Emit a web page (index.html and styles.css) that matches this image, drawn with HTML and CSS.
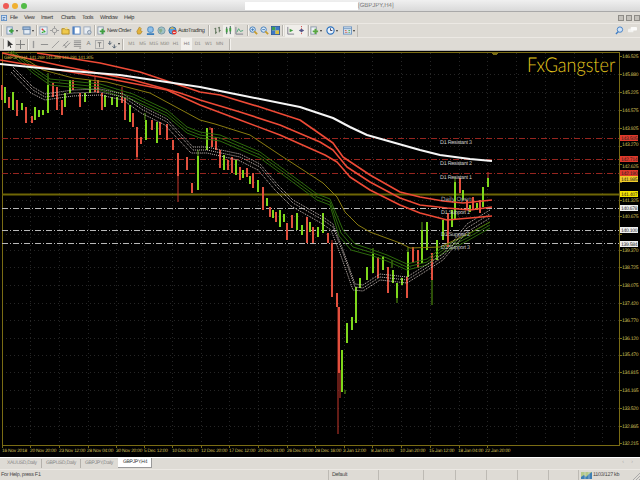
FILE: index.html
```html
<!DOCTYPE html>
<html lang="en">
<head>
<meta charset="utf-8">
<title>GBPJPY,H4</title>
<link rel="stylesheet" href="styles.css">
</head>
<body>
<div class="app">
  <header class="titlebar">
    <span class="light red"></span><span class="light amber"></span><span class="light green"></span>
    <span class="search-field"></span>
    <span class="title">[GBPJPY,H4]</span>
  </header>
  <nav class="menubar">
    <svg class="app-icon" viewBox="0 0 7 7"><rect x=".5" y=".5" width="6" height="6" fill="#cfe0f4" stroke="#5d8cc4"/><path d="M2 3h3M2 5h2" stroke="#3d6ca4"/></svg>
    <span class="menu m-file">File</span><span class="menu m-view">View</span><span class="menu m-insert">Insert</span><span class="menu m-charts">Charts</span><span class="menu m-tools">Tools</span><span class="menu m-window">Window</span><span class="menu">Help</span>
    <span class="winbtns"><i></i><i></i><i></i></span>
  </nav>
  <div class="toolbar">
    <span class="sep s-first"></span>
    <span class="btn wide w16"><svg viewBox="0 0 10 10"><rect x="1" y="1" width="6" height="8" fill="#dfe9f5" stroke="#7a94b4"/><path d="M6 3v5M3.500 5.500h5" stroke="#3fa03f" stroke-width="2"/></svg><b class="caret"></b></span>
    <span class="btn wide"><svg viewBox="0 0 10 10"><rect x="1" y="1" width="8" height="3" fill="#9db9da" stroke="#5d80a8"/><rect x="2" y="4" width="7" height="5" fill="#e6edf5" stroke="#6d8cb0"/></svg><b class="caret"></b></span>
    <span class="sep s-a"></span>
    <span class="btn"><svg viewBox="0 0 10 10"><rect x="1" y="1" width="8" height="8" fill="#edf1f6" stroke="#8da3bd"/><path d="M3 3l2 2" stroke="#d33" stroke-width="1.500"/><path d="M5 5l2 2M3 7h2" stroke="#3a3" stroke-width="1.500"/></svg></span>
    <span class="btn"><svg viewBox="0 0 10 10"><circle cx="5" cy="5" r="2.500" fill="none" stroke="#999"/><path d="M5 0v3M5 7v3M0 5h3M7 5h3" stroke="#999"/></svg></span>
    <span class="btn"><svg viewBox="0 0 10 10"><path d="M1 3h3l1 1h4v5H1z" fill="#efc94c" stroke="#b08a20"/><circle cx="6" cy="2.500" r="1.500" fill="#f3dc8c"/></svg></span>
    <span class="btn"><svg viewBox="0 0 10 10"><rect x="1" y="1" width="8" height="8" fill="#fff" stroke="#4d7fc0"/><rect x="1" y="1" width="2" height="8" fill="#4d7fc0"/></svg></span>
    <span class="btn"><svg viewBox="0 0 10 10"><rect x="1" y="1" width="7" height="8" fill="#e8edf3" stroke="#9aa9bb"/><circle cx="7" cy="7" r="2" fill="#cfd9e6" stroke="#7e8ea3"/></svg></span>
    <span class="sep s-b"></span>
    <span class="btn textbtn"><svg viewBox="0 0 10 10"><rect x="1" y="1" width="6" height="8" fill="#eef2f6" stroke="#8a98a8"/><path d="M6 3v6M3 6h6" stroke="#3fa03f" stroke-width="2"/></svg><span class="label l-order">New Order</span></span>
    <span class="btn"><svg viewBox="0 0 10 10"><path d="M2 6l3-5 2 2-1 2 2 1-2 3H3z" fill="#e2b23c" stroke="#9c7418" stroke-width=".6"/></svg></span>
    <span class="btn"><svg viewBox="0 0 10 10"><rect x="2" y="1" width="6" height="6" rx="2" fill="#8fc0e8" stroke="#3d7fbc"/><path d="M1 9h8" stroke="#3d7fbc" stroke-width="2"/></svg></span>
    <span class="btn"><svg viewBox="0 0 10 10"><circle cx="5" cy="5" r="4" fill="#9fc3c6" stroke="#7896a6"/><path d="M2 4l3-1 1 2-2 3" fill="#88ab88"/></svg></span>
    <span class="btn textbtn auto"><svg viewBox="0 0 10 10"><circle cx="5" cy="5" r="4" fill="#58a0dc" stroke="#2a6ca8"/><path d="M1.500 3l3-2 3 2z" fill="#e8b43c"/><rect x="4.500" y="4.500" width="5" height="5" rx="2.500" fill="#e02c24"/><rect x="5.500" y="6.500" width="3" height="1" fill="#fff"/></svg><span class="label l-auto">AutoTrading</span></span>
    <span class="sep s-c"></span>
    <span class="btn"><svg viewBox="0 0 10 10"><path d="M3 2v7M1.500 3H3M3 7h1.500M7 1v6M5.500 2H7M7 5h1.500" stroke="#556b50"/></svg></span>
    <span class="btn active"><svg viewBox="0 0 10 10"><path d="M3 1v8M7 0v9" stroke="#355"/><rect x="2" y="3" width="2" height="4" fill="#3f9f3f"/><rect x="6" y="2" width="2" height="4" fill="#3f9f3f"/></svg></span>
    <span class="btn"><svg viewBox="0 0 10 10"><path d="M1 1v8h8" fill="none" stroke="#778"/><path d="M2 7l2-4 2 3 3-1" fill="none" stroke="#3f9f6f"/></svg></span>
    <span class="sep s-d"></span>
    <span class="btn"><svg viewBox="0 0 10 10"><circle cx="4" cy="4" r="3" fill="#d8e8f6" stroke="#3d78b8"/><path d="M6 6l3 3" stroke="#c89c2c" stroke-width="2"/><path d="M2.500 4h3M4 2.500v3" stroke="#3d78b8"/></svg></span>
    <span class="btn"><svg viewBox="0 0 10 10"><circle cx="4" cy="4" r="3" fill="#d8e8f6" stroke="#3d78b8"/><path d="M6 6l3 3" stroke="#c89c2c" stroke-width="2"/><path d="M2.500 4h3" stroke="#3d78b8"/></svg></span>
    <span class="btn"><svg viewBox="0 0 10 10"><rect x="1" y="1" width="4" height="4" fill="#3f9f4f"/><rect x="5" y="1" width="4" height="4" fill="#3d78c8"/><rect x="1" y="5" width="4" height="4" fill="#3d78c8"/><rect x="5" y="5" width="4" height="4" fill="#d8c040"/><rect x=".5" y=".5" width="9" height="9" fill="none" stroke="#2d5d9c"/></svg></span>
    <span class="sep s-e"></span>
    <span class="btn active"><svg viewBox="0 0 10 10"><path d="M2 1v8h7" fill="none" stroke="#778"/><path d="M4 3l4 2-4 2z" fill="#3f9f3f"/></svg></span>
    <span class="btn active"><svg viewBox="0 0 10 10"><path d="M5 0v10" stroke="#c33" stroke-dasharray="1 1"/><path d="M2 5l3-2v4zM8 5L5 3v4z" fill="#558"/></svg></span>
    <span class="sep s-f"></span>
    <span class="btn wide w16"><svg viewBox="0 0 10 10"><rect x="1" y="1" width="6" height="8" fill="#eef2f6" stroke="#8a98a8"/><path d="M6 3v6M3 6h6" stroke="#58a83f" stroke-width="2"/></svg><b class="caret"></b></span>
    <span class="btn wide w17"><svg viewBox="0 0 10 10"><circle cx="5" cy="5" r="4" fill="#eaf2fa" stroke="#2f74c0" stroke-width="1.300"/><path d="M5 2.500V5h2" fill="none" stroke="#335"/></svg><b class="caret"></b></span>
    <span class="btn wide"><svg viewBox="0 0 10 10"><rect x=".5" y="1" width="9" height="8" fill="#dce8f4" stroke="#6d94c0"/><path d="M1 3h8" stroke="#6d94c0"/><path d="M2 5h2M2 7h3" stroke="#c65"/><path d="M6 5h2M6 7h2" stroke="#5a5"/></svg><b class="caret"></b></span>
    <span class="toolbar-end"></span>
    <span class="tools-right">
      <svg viewBox="0 0 10 10"><circle cx="5.500" cy="4" r="3" fill="#cfe2f6" stroke="#3d7cc4"/><path d="M3.500 6.500L1 9" stroke="#3d7cc4" stroke-width="1.500"/></svg>
      <svg viewBox="0 0 10 10"><rect x="0" y="3" width="6" height="4" rx="1" fill="#f2f2f0"/><rect x="3" y="1" width="7" height="4" rx="1" fill="#fbfbfa"/></svg>
    </span>
  </div>
  <div class="toolbar second">
    <span class="grip"></span>
    <span class="btn active"><svg viewBox="0 0 10 10"><path d="M3 0v8l2-2 1 3 1-.5L6 5.500h3z" fill="#333"/></svg></span>
    <span class="btn"><svg viewBox="0 0 10 10"><path d="M5 0v10M0 5h10" stroke="#777"/></svg></span>
    <span class="sep s-g"></span>
    <span class="btn"><svg viewBox="0 0 10 10"><path d="M5 1v8" stroke="#999" stroke-width="1.500"/></svg></span>
    <span class="btn"><svg viewBox="0 0 10 10"><path d="M1 5h8" stroke="#888"/></svg></span>
    <span class="btn"><svg viewBox="0 0 10 10"><path d="M1 9l8-8" stroke="#999"/></svg></span>
    <span class="btn"><svg viewBox="0 0 10 10"><path d="M1 7l6-6M3 9l6-6M2 5l3 3" stroke="#888"/></svg></span>
    <span class="btn"><svg viewBox="0 0 10 10"><path d="M1 1h8M1 3h8M1 5h8M1 7h8M7 9h2" stroke="#888"/></svg></span>
    <span class="btn glyph">A</span>
    <span class="btn"><svg viewBox="0 0 10 10"><rect x=".5" y=".5" width="9" height="9" fill="none" stroke="#aaa"/><path d="M3 3h4M5 3v5" stroke="#777"/></svg></span>
    <span class="btn wide w-arrows"><svg viewBox="0 0 10 10"><path d="M2 1v4M0 3l2 2 2-2M7 5v4M5 7l2 2 2-2" fill="none" stroke="#456"/></svg><b class="caret"></b></span>
    <span class="sep s-h"></span>
    <span class="tf">M1</span><span class="tf">M5</span><span class="tf">M15</span><span class="tf">M30</span><span class="tf">H1</span><span class="tf on">H4</span><span class="tf">D1</span><span class="tf">W1</span><span class="tf">MN</span>
    <span class="sep"></span>
  </div>
  <main class="chart-wrap">
    <svg class="chart" viewBox="0 0 640 406">
      <g transform="translate(0 -51)">
        <rect x="0" y="51" width="640" height="406" fill="#000"/>
        <path class="grid" d="M30 53V445M59 53V445M88 53V445M116 53V445M144 53V445M172 53V445M201 53V445M229 53V445M258 53V445M287 53V445M315 53V445M344 53V445M372 53V445M401 53V445M430 53V445M459 53V445M487 53V445M516 53V445M545 53V445M574 53V445M602 53V445M2 74H619M2 92H619M2 110H619M2 128H619M2 146H619M2 164H619M2 182H619M2 200H619M2 216H619M2 234H619M2 250H619M2 267H619M2 285H619M2 303H619M2 320H619M2 338H619M2 355H619M2 372H619M2 390H619M2 408H619M2 426H619"/>
        <path class="frame" d="M2 52.500H619.500V445.500H2V52.500"/>
        <path class="frame" d="M492 53h6l-3 2z"/>
        <path class="frame ticks" d="M2 445v3M30 445v3M59 445v3M88 445v3M116 445v3M144 445v3M172 445v3M201 445v3M229 445v3M258 445v3M287 445v3M315 445v3M344 445v3M372 445v3M401 445v3M430 445v3M459 445v3M487 445v3M619 56h3M619 74h3M619 92h3M619 110h3M619 128h3M619 146h3M619 164h3M619 182h3M619 200h3M619 216h3M619 234h3M619 250h3M619 267h3M619 285h3M619 303h3M619 320h3M619 338h3M619 355h3M619 372h3M619 390h3M619 408h3M619 426h3M619 443h3"/>

        <path class="level-red" d="M2 138.500H619M2 159.500H619M2 173.500H619"/>
        <path class="level-open" d="M2 194.500H619"/>
        <path class="level-white" d="M2 208.500H619M2 230.500H619M2 243.500H619"/>

        <path class="wick-red" d="M178 153V202M338 307V434M122 87V100M210 127V130M95 77V90M432 253V280M448 213V247M488 172V178M332 240V250M137 157V160M340 370V398"/>
        <path class="wick-green" d="M48 73V85M432 263V305M422 222V230M373 248V254M392 260V268M397 298V303M145 113V120M198 150V156M455 177V182M345 390V394M408 247V252"/>

        <path class="body-red" d="M2 85V100M9 97V108M17 100V116M26 107V123M32 116V123M53 83V97M57 87V110M62 100V115M73 80V90M80 93V107M95 82V92M98 80V93M102 93V110M122 97V103M125 97V120M133 113V127M137 127V157M141 137V144M152 120V130M160 122V135M167 124V140M173 140V150M178 153V176M187 157V170M192 183V193M212 128V147M216 137V150M220 150V168M228 160V170M232 157V173M240 167V180M247 168V177M253 173V188M263 187V210M270 207V217M276 212V222M287 223V240M292 215V228M307 217V243M313 227V243M328 233V243M332 243V297M337 293V307M339 307V373M388 267V293M378 257V278M407 277V298M413 247V263M418 250V268M432 253V280M448 213V247M460 178V193M467 200V210M473 197V210M480 200V213"/>
        <path class="body-green" d="M5 87V103M13 92V110M22 103V110M35 107V120M39 110V117M43 110V115M48 85V113M65 93V107M70 80V93M85 93V102M90 80V93M105 95V107M112 97V105M117 97V107M130 105V122M146 120V140M157 122V143M198 156V190M207 128V150M224 155V170M236 160V175M243 170V178M250 176V184M258 180V192M267 198V206M273 210V218M280 210V227M284 214V222M297 213V230M302 225V235M310 222V232M318 227V237M323 213V233M342 350V392M347 323V343M352 317V330M356 287V323M360 278V288M367 267V280M373 254V273M383 256V270M393 270V283M397 283V298M402 278V285M408 252V277M422 230V263M427 222V250M437 240V260M443 220V240M452 210V227M455 182V220M463 190V200M470 205V212M477 203V210M483 187V207M488 178V187"/>

        <path class="ma-olive" d="M8 52L30 62 43 70 73 78 107 82 150 93 187 113 200 120 215 124 250 135 280 155 323 183 337 197 345 212 358 225 370 232 400 243 410 248 440 247 470 233 490 222"/>
        <g class="ma-green">
          <path d="M13 51L33 67 50 79 100 84 133 94 167 110 187 127 200 132 220 135 260 152 290 174 317 194 330 199 343 230 355 244 373 250 387 255 407 264 427 259 443 247 467 235 490 222"/>
          <path d="M11 51L33 70 50 82 100 87 133 97 167 113 187 130 200 135 220 138 260 155 290 177 317 197 330 202 341 233 353 247 373 253 387 258 407 267 427 262 443 250 467 238 490 225"/>
          <path d="M9 52L33 73 50 85 100 90 133 100 167 116 187 133 200 138 220 141 260 158 290 180 317 200 330 205 339 236 351 250 373 256 387 261 407 270 427 265 443 253 467 241 490 228"/>
        </g>
        <g class="ma-dots">
          <path d="M13 67L33 87 45 94 73 90 100 89 123 94 143 107 167 119 193 147 207 147 240 154 260 164 277 184 293 200 323 217 333 224 343 250 355 284 363 285 380 274 407 277 423 267 443 254 467 224 490 210"/>
          <path d="M13 70L33 90 45 97 73 93 100 92 123 97 143 110 167 122 193 150 207 150 240 157 260 167 277 187 293 203 323 220 333 227 343 253 355 287 363 288 380 277 407 280 423 270 443 257 467 228 490 214"/>
          <path d="M11 72L31 93 45 100 73 96 100 95 123 100 141 113 165 125 191 153 207 153 238 160 258 170 275 190 291 206 321 223 331 230 341 256 353 290 363 291 380 280 407 283 423 273 443 260 467 232 490 218"/>
        </g>
        <path class="ma-red" d="M37 53L100 63 140 72 200 92 220 95 260 107 300 120 333 143 343 157 370 175 400 192 420 197 443 201 463 203 492 200"/>
        <path class="ma-red" d="M2 53L67 67 133 80 180 93 200 100 240 112 280 125 320 142 333 150 347 167 370 182 400 198 420 205 447 208 470 210 492 207"/>
        <path class="ma-red" d="M0 60L100 77 167 90 200 105 240 120 280 135 325 155 337 162 350 177 370 190 400 205 420 213 447 220 470 218 492 216"/>
        <path class="ma-white" d="M0 64L60 70 120 75 200 87 240 95 300 107 333 118 350 127 367 135 420 150 440 155 470 159 492 161"/>

        <text class="legend" x="4" y="59">GBPJPY,H4  141.269 141.388 141.291 141.305</text>
        <text class="brand" transform="translate(527 72) scale(.88 1)">FxGangster</text>

        <g class="note">
          <text x="440" y="144">D1 Resistant 3</text>
          <text x="440" y="165">D1 Resistant 2</text>
          <text x="440" y="179">D1 Resistant 1</text>
          <text class="note-big" x="441" y="201">Daily Open</text>
          <text x="441" y="214">D1 Support 1</text>
          <text x="441" y="236">D1 Support 2</text>
          <text x="441" y="249">D1 Support 3</text>
        </g>

        <g class="axis-y">
          <text x="622" y="58">146.525</text><text x="622" y="76">145.880</text><text x="622" y="94">145.225</text><text x="622" y="112">144.575</text><text x="622" y="130">143.925</text><text x="622" y="146">143.270</text><text x="622" y="168">142.625</text><text x="622" y="202">141.325</text><text x="622" y="218">140.675</text><text x="622" y="252">139.370</text><text x="622" y="269">138.725</text><text x="622" y="287">138.075</text><text x="622" y="305">137.420</text><text x="622" y="322">136.770</text><text x="622" y="340">136.120</text><text x="622" y="356">135.470</text><text x="622" y="374">134.815</text><text x="622" y="392">134.165</text><text x="622" y="410">133.520</text><text x="622" y="428">132.865</text><text x="622" y="445">132.215</text>
        </g>

        <g class="tags">
          <rect class="tag-red" x="620" y="135" width="18" height="6"/><text x="621" y="140">143.505</text>
          <rect class="tag-red" x="620" y="156" width="18" height="6"/><text x="621" y="161">142.714</text>
          <rect class="tag-red" x="620" y="170" width="18" height="6"/><text x="621" y="175">142.190</text>
          <rect class="tag-gold" x="620" y="176" width="18" height="6"/><text x="621" y="181">141.985</text>
          <rect class="tag-yellow" x="620" y="191" width="18" height="6"/><text x="621" y="196">141.407</text>
          <rect class="tag-white" x="620" y="205" width="18" height="6"/><text x="621" y="210">140.678</text>
          <rect class="tag-white" x="620" y="227" width="18" height="6"/><text x="621" y="232">140.100</text>
          <rect class="tag-white" x="620" y="241" width="18" height="6"/><text x="621" y="246">139.584</text>
        </g>

        <g class="axis-x">
          <text x="2" y="452">16 Nov 2018</text><text x="30" y="452">20 Nov 20:00</text><text x="59" y="452">23 Nov 12:00</text><text x="87" y="452">28 Nov 04:00</text><text x="116" y="452">30 Nov 20:00</text><text x="144" y="452">5 Dec 12:00</text><text x="172" y="452">10 Dec 04:00</text><text x="201" y="452">12 Dec 20:00</text><text x="229" y="452">17 Dec 12:00</text><text x="258" y="452">20 Dec 04:00</text><text x="287" y="452">26 Dec 00:00</text><text x="315" y="452">28 Dec 16:00</text><text x="343" y="452">3 Jan 12:00</text><text x="371" y="452">8 Jan 04:00</text><text x="400" y="452">10 Jan 20:00</text><text x="429" y="452">15 Jan 12:00</text><text x="458" y="452">18 Jan 04:00</text><text x="485" y="452">22 Jan 20:00</text>
        </g>
      </g>
    </svg>
  </main>
  <div class="tabs">
    <span class="tab">XAUUSD,Daily</span>
    <span class="tab">GBPUSD,Daily</span>
    <span class="tab t-third">GBPJPY,Daily</span>
    <span class="tab current">GBPJPY,H4</span>
    <span class="tab-arrows">‹ ›</span>
  </div>
  <footer class="status">
    <span class="help">For Help, press F1</span>
    <span class="cell c-default">Default</span>
    <span class="cell c0"></span><span class="cell c1"></span><span class="cell c2"></span><span class="cell c2"></span><span class="cell c2"></span><span class="cell c3"></span>
    <span class="cell c-conn"><svg viewBox="0 0 11 7"><rect width="11" height="7" fill="#3e7fb4"/><path d="M0 5l3-2 2 2 3-3 3-2H0z" fill="#b6c98a"/><path d="M4 0v7M8 0v7" stroke="#dbe6ee" stroke-width=".5"/></svg><span>1103/127 kb</span></span>
    <svg class="resize" viewBox="0 0 8 8"><path d="M1 8l7-7M4 8l4-4M7 8l1-1" stroke="#aaa"/></svg>
  </footer>
</div>
</body>
</html>
```
FILE: styles.css
```css
* { box-sizing: border-box; }
html, body { margin: 0; padding: 0; width: 640px; height: 480px; overflow: hidden; }
body { font-family: "Liberation Sans", Arial, sans-serif; background: #dedbd5; color: #333; text-rendering: geometricPrecision; }
.app { display: flex; flex-direction: column; width: 640px; height: 480px; }

.titlebar { height: 12px; display: flex; align-items: center; padding-left: 3px; gap: 3px; background: linear-gradient(#f0f0f0, #d9d9d9); border-bottom: 1px solid #a9a9a9; flex: none; }
.light { width: 6px; height: 6px; border-radius: 50%; }
.light.red { background: #ee5a55; }
.light.amber { background: #f0b030; }
.light.green { background: #52bb46; }
.search-field { width: 113px; height: 8px; background: #fff; margin-left: 215px; }
.title { font-size: 6px; color: #777; margin-left: -3px; }

.menubar { height: 11px; display: flex; align-items: center; flex: none; background: #dedbd5; padding-left: 1px; font-size: 5.600px; letter-spacing: -.4px; }
.app-icon { width: 6px; height: 6px; flex: none; }
.menu { color: #333; flex: none; }
.m-file { margin-left: 3px; width: 14px; }
.m-view { width: 17px; }
.m-insert { width: 20px; }
.m-charts { width: 21px; }
.m-tools { width: 18px; }
.m-window { width: 24px; }
.winbtns { margin-left: auto; display: flex; gap: 2px; padding-right: 0; }
.winbtns i { display: block; width: 6px; height: 6px; background: #c4c1bb; border: 1px solid #8e8c87; }

.toolbar { height: 14px; display: flex; align-items: center; flex: none; padding-left: 1px; background: #dedbd5; font-size: 5px; border-top: 1px solid #ece9e4; }
.toolbar.second { border-bottom: 1px solid #b6b3ad; }
.sep { width: 1px; height: 11px; background: #b5b2ac; margin: 0 3px 0 4px; flex: none; box-shadow: 1px 0 0 #f4f2ee; }
.s-first { margin: 0 3px 0 0; }
.s-a { margin: 0 1px 0 0; }
.s-b { margin: 0 2px 0 1px; }
.s-c { margin: 0 3px 0 4px; }
.s-d { margin: 0 0 0 2px; }
.s-e { margin: 0 2px 0 1px; }
.s-f { margin: 0 0 0 1px; }
.s-g { margin: 0 0 0 1px; }
.s-h { margin: 0 3px 0 0; }
.grip { width: 1px; height: 10px; margin: 0 0 0 2px; background: #a9a6a0; flex: none; }
.btn { width: 11px; height: 12px; display: flex; align-items: center; justify-content: center; flex: none; }
.btn svg { width: 9px; height: 9px; flex: none; }
.btn.active { background: #f0eeea; }
.btn.wide { width: 15px; justify-content: flex-start; padding-left: 1px; gap: 1px; }
.btn.w16 { width: 16px; }
.btn.w17 { width: 17px; }
.btn.w-arrows { margin-left: 2px; }
.btn.textbtn { width: auto; gap: 1px; justify-content: flex-start; }
.label { font-size: 5.600px; letter-spacing: -.35px; color: #333; white-space: nowrap; }
.l-order { width: 27px; }
.btn.auto { margin-left: 1px; }
.caret { width: 0; height: 0; border-left: 1.500px solid transparent; border-right: 1.500px solid transparent; border-top: 2px solid #333; flex: none; }
.glyph { font-size: 6px; color: #777; }
.tf { width: 11px; height: 12px; display: flex; align-items: center; justify-content: center; font-size: 4.800px; letter-spacing: -.2px; color: #8a8882; flex: none; }
.tf.on { background: #f2f0ec; color: #777; }
.toolbar-end { width: 1px; height: 12px; background: #bdbab4; flex: none; }
.tools-right { margin-left: auto; display: flex; gap: 4px; padding-right: 3px; }
.tools-right svg { width: 9px; height: 9px; }

.chart-wrap { height: 406px; flex: none; background: #000; }
.chart { display: block; width: 640px; height: 406px; }
.chart path { fill: none; }
.chart .grid { stroke: #262626; stroke-width: 1; stroke-dasharray: 1 3; shape-rendering: crispEdges; }
.chart .frame { stroke: #7a6c14; stroke-width: 1; shape-rendering: crispEdges; }
.level-red { stroke: #96251f; stroke-dasharray: 6 2 1 2; }
.level-open { stroke: #6e6605; stroke-width: 2; }
.level-white { stroke: #b8b8b8; stroke-dasharray: 6 2 1 2; }
.wick-red { stroke: #c8382c; stroke-width: 1; }
.wick-green { stroke: #58a010; stroke-width: 1; }
.body-red { stroke: #e2503e; stroke-width: 2; }
.body-green { stroke: #7ed81c; stroke-width: 2; }
.ma-olive { stroke: #8a7c10; stroke-width: 1; stroke-linejoin: round; }
.ma-green path { stroke: #2d6a0c; stroke-width: 1; stroke-linejoin: round; }
.ma-dots path { stroke: #c9bdb8; stroke-width: 1; stroke-dasharray: 1 1; stroke-linejoin: round; }
.ma-red { stroke: #ee4a36; stroke-width: 1.600; stroke-linejoin: round; }
.ma-white { stroke: #f6f6f6; stroke-width: 2; stroke-linejoin: round; }

.chart text { font-family: "Liberation Sans", Arial, sans-serif; white-space: pre; }
.chart .legend { font-size: 4.800px; letter-spacing: -.3px; fill: #c8b440; }
.chart .brand { font-family: "Lato", sans-serif; font-weight: 300; font-size: 20.500px; fill: #e6c81e; }
.note text { font-size: 5.400px; letter-spacing: -.25px; fill: #cfcfcf; }
.note .note-big { font-size: 6.200px; letter-spacing: 0; fill: #a8a8a8; }
.axis-y text { font-size: 5px; letter-spacing: -.25px; fill: #d6c25a; }
.axis-x text { font-size: 4.800px; letter-spacing: -.2px; fill: #d6c25a; }
.tags text { font-size: 5px; letter-spacing: -.25px; fill: #222; }
.tag-red { fill: #e0392b; }
.tag-gold { fill: #f0cc28; }
.tag-yellow { fill: #f5e400; }
.tag-white { fill: #efefef; }

.tabs { height: 12px; display: flex; align-items: flex-start; flex: none; background: #dedbd5; border-top: 1px solid #fff; padding-left: 3px; font-size: 5px; letter-spacing: -.3px; color: #888; }
.tab { height: 9px; line-height: 9px; padding: 0 0 0 4px; border-right: 1px solid #b4b1ab; margin-top: 1px; width: 39px; white-space: nowrap; flex: none; }
.tab.t-third { width: 37px; border-right: 0; }
.tab.current { width: 34px; height: 10px; margin-top: 0; padding: 0 0 0 5px; background: #fff; color: #333; border: 0; border-bottom: 1px solid #999; border-right: 1px solid #999; }
.tab-arrows { margin-left: auto; padding-right: 4px; color: #aaa; letter-spacing: 3px; font-size: 5px; line-height: 9px; }

.status { height: 11px; display: flex; align-items: center; flex: 1; position: relative; background: #dedbd5; border-top: 1px solid #ebe8e3; font-size: 5.400px; letter-spacing: -.28px; color: #444; }
.help { width: 328px; padding-left: 1px; white-space: nowrap; flex: none; }
.cell { height: 100%; border-left: 1px solid #bdbab4; flex: none; padding-left: 3px; }
.c-default { width: 50px; line-height: 10px; }
.c0 { width: 45px; }
.c1 { width: 32px; }
.c2 { width: 31px; }
.c3 { width: 30px; }
.c-conn { display: flex; align-items: center; gap: 1px; width: 62px; padding-left: 2px; white-space: nowrap; }
.c-conn svg { width: 11px; height: 7px; flex: none; }
.resize { position: absolute; right: 0; bottom: 0; width: 8px; height: 8px; }
```
